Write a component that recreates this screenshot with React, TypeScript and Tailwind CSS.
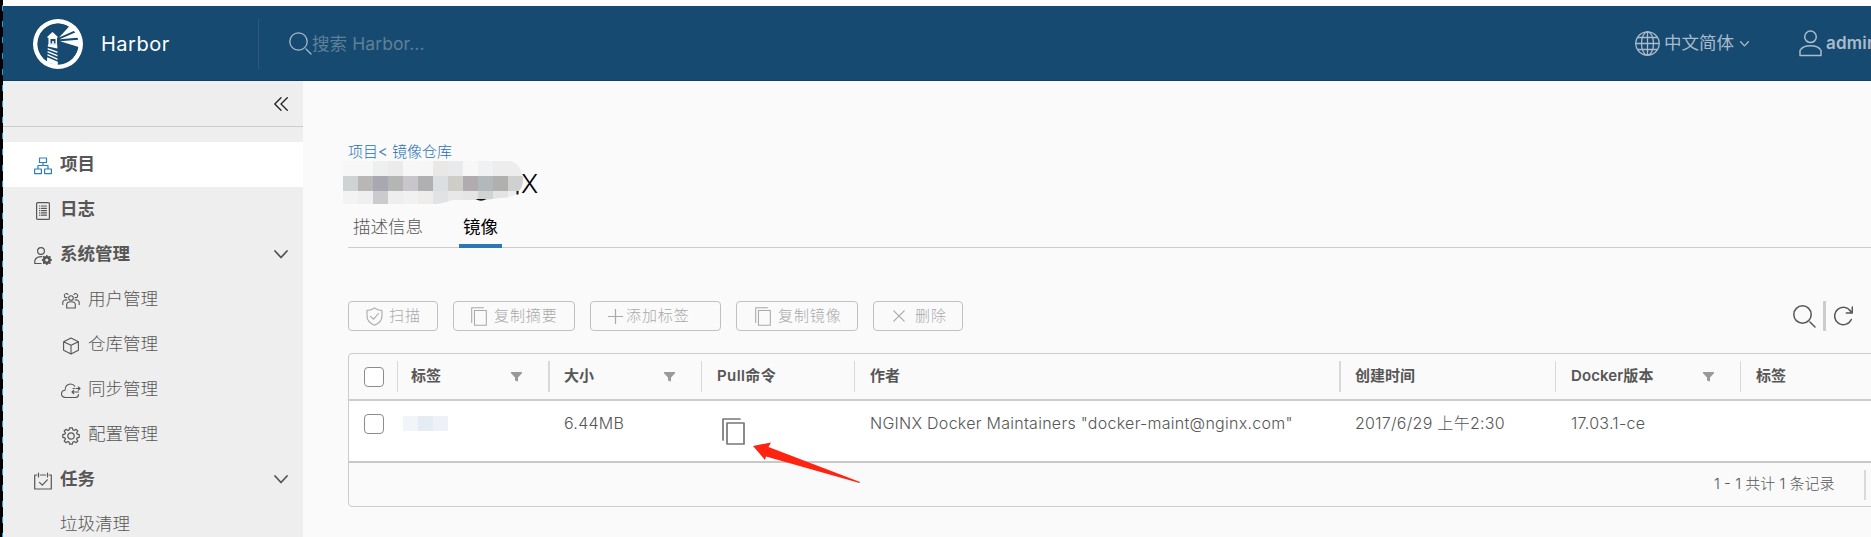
import React from 'react';

type P = { className?: string };

const Svg = ({ className, vb, children, sw = 1.2 }: { className?: string; vb: string; children: React.ReactNode; sw?: number }) => (
  <svg className={className} viewBox={vb} fill="none" stroke="currentColor" strokeWidth={sw} strokeLinecap="round" strokeLinejoin="round">
    {children}
  </svg>
);

const Logo = ({ className }: P) => (
  <svg className={className} viewBox="0 0 50 50" fill="#fff">
    <path fillRule="evenodd" d="M25 0a25 25 0 1 0 0 50a25 25 0 1 0 0-50zM25 4.6a20.4 20.4 0 0 1 0 40.8a20.4 20.4 0 0 1 0-40.8z" />
    <path fill="#174a70" d="M25 4.500a20.500 20.500 0 1 0 0 41a20.500 20.500 0 1 0 0-41z" />
    <path d="M19.500 13L24.500 17.500V19H14.500V17.500z" />
    <path fillRule="evenodd" d="M15.500 18.500h8.500v7h-8.500zM17.500 20h5v4.500h-1.700v-2.500h-1.600v2.500h-1.700z" />
    <path d="M15 25.300h9.200l.2 4.200L14.800 27.500z" />
    <path d="M14.700 29l9.700 3.500v1.600L14.700 30.600zM14.600 32l9.900 4v1.600L14.600 33.600zM14.500 35l10 4.500v1.600L14.500 36.600zM14.200 38.200l10.600 4.500V47L14 43z" />
    <path d="M26 18.500L37.500 6L43 11zM26.500 20.300L44.500 12.500L47.500 18.500zM27 22.300L49 20.500V29z" />
  </svg>
);

const SearchIcon = ({ className, sw = 1.3 }: P & { sw?: number }) => (
  <Svg className={className} vb="0 0 23 23" sw={sw}>
    <circle cx="9.500" cy="9.500" r="8.700" />
    <path d="M17 17l5 5" />
  </Svg>
);

const CopyIcon = ({ className, sw = 1.2 }: P & { sw?: number }) => (
  <Svg className={className} vb="0 0 23 27" sw={sw}>
    <path d="M1 22V1h17" />
    <path d="M5 5h17v21H5z" />
  </Svg>
);

const Filter = () => (
  <svg className="h-[10px] w-[11px] shrink-0" viewBox="0 0 11 10" fill="#9a9a9a">
    <path d="M0 0h11v1.200L7 5.500V9.500L4 8.500V5.500L0 1.200z" />
  </svg>
);

const Chevron = ({ className, sw = 1.800 }: P & { sw?: number }) => (
  <Svg className={className} vb="0 0 14 9" sw={sw}>
    <path d="M1 1l6 6.500L13 1" />
  </Svg>
);

const OrgIcon = () => (
  <Svg className="h-[18px] w-[18px] text-[#2f7fc0]" vb="0 0 18 18" sw={1.2}>
    <path d="M5.500 1h7v4.500h-7zM.6 12h6.800v4.600H.6zM10.600 12h6.800v4.600h-6.800zM9 5.500v3M4 11.500v-3h10v3" />
  </Svg>
);
const LogIcon = () => (
  <Svg className="h-[18px] w-[18px]" vb="0 0 18 18" sw={1.2}>
    <rect x="2.600" y=".6" width="12.800" height="16.800" rx="1" />
    <path d="M5.500 4h.4M7.500 4h5M5.500 6.300h.4M7.500 6.300h5M5.500 8.600h.4M7.500 8.600h5M5.500 10.900h.4M7.500 10.900h5M5.500 13.200h.4M7.500 13.200h5" />
  </Svg>
);
const AdminIcon = () => (
  <Svg className="h-[18px] w-[18px]" vb="0 0 18 18" sw={1.2}>
    <circle cx="7" cy="4" r="3.400" />
    <path d="M7 16.500H.8v-3c1-2.500 3.500-3.800 7-3.800" />
    <circle cx="12.800" cy="13" r="2.800" strokeWidth="2.400" />
    <path strokeWidth="1.800" d="M12.800 8.800v1M12.800 16.200v1M8.600 13h1M16 13h1.100M9.800 10l.7.700M15.100 15.300l.7.700M9.800 16l.7-.7M15.100 10.700l.7-.7" />
  </Svg>
);
const UsersIcon = () => (
  <Svg className="h-[18px] w-[18px]" vb="0 0 18 18" sw={1.1}>
    <circle cx="9" cy="6" r="2.300" />
    <path d="M4.700 16v-3.500c0-2 1.500-2.800 4.300-2.800s4.300.8 4.300 2.800V16z" />
    <path d="M5 5.500A2 2 0 1 1 6 2.500M13 5.500a2 2 0 1 0-1-3M5 8c-2.500-.5-4.200.6-4.200 2.500V12.500M13 8c2.500-.5 4.200.6 4.200 2.500V12.500" />
  </Svg>
);
const CubeIcon = () => (
  <Svg className="h-[18px] w-[18px]" vb="0 0 18 18" sw={1.1}>
    <path d="M9 1l7.400 3.700v8.600L9 17l-7.400-3.700V4.700zM1.600 4.700L9 8.300l7.400-3.600M9 8.300V17" />
  </Svg>
);
const CloudIcon = () => (
  <Svg className="-ml-px h-[16px] w-[20px]" vb="0 0 20 16" sw={1.1}>
    <path d="M17.500 11.500c0 2-1 3-3 3H4.500c-2.300 0-4-1.400-4-3.500S2 7.500 4 7.300C4 3.500 6.300 1 9.500 1c2 0 3.500.9 4.300 2.300" />
    <path d="M12 5.500h1.500M15 5.500h4M17.300 3.800L19 5.500l-1.700 1.700M17.500 9H11M12.700 7.300L11 9l1.700 1.700" />
  </Svg>
);
const GearIcon = () => (
  <Svg className="h-[18px] w-[18px]" vb="0 0 18 18" sw={1.2}>
    <circle cx="9" cy="9" r="3.200" />
    <path d="M7.600.8h2.800l.5 2.100 1.300.6 1.900-1.200 1.700 1.700-1.200 1.900.6 1.300 2 .5v2.600l-2 .5-.6 1.300 1.200 1.900-1.700 1.700-1.900-1.200-1.300.6-.5 2.100H7.600l-.5-2.100-1.300-.6-1.900 1.200-1.700-1.700 1.200-1.900-.6-1.300-2-.5V7.700l2-.5.6-1.300L2.200 4l1.700-1.700 1.900 1.200 1.300-.6z" />
  </Svg>
);
const TaskIcon = () => (
  <Svg className="h-[18px] w-[18px]" vb="0 0 18 18" sw={1.2}>
    <path d="M2.800 3H.7v14h16.600V3h-2.100M6.500 3h5M4.500 1v4M13.500 1v4M5.500 10.300l2.800 2.800 5-5.300" />
  </Svg>
);

type ItemProps = { icon?: React.ReactNode; label: string; sub?: boolean; bold?: boolean; active?: boolean; open?: boolean };
const Item = ({ icon, label, sub, bold, active, open }: ItemProps) => (
  <div className={`flex h-[45px] shrink-0 items-center pr-[15px] ${sub ? (icon ? 'pl-[59px]' : 'pl-[57px]') : 'pl-[31px]'} ${active ? 'bg-white' : ''}`}>
    {icon && <span className="mt-[2px] flex w-[26px] shrink-0 items-center">{icon}</span>}
    <span className={`-mt-[2px] flex-1 text-[17.5px] leading-6 ${bold ? 'font-bold' : 'font-light'}`}>{label}</span>
    {open && <Chevron className="h-[9px] w-[14px]" />}
  </div>
);

const Btn = ({ icon, label, className }: { icon: React.ReactNode; label: string; className: string }) => (
  <div className={`flex h-[30px] items-center whitespace-nowrap rounded-[4px] border border-[#c1c1c1] text-[15px] font-light tracking-[0.9px] text-[#a9a9a9] ${className}`}>
    {icon}
    {label}
  </div>
);

const cols = [
  { label: '标签', w: 'w-[151px]', sep: 'w-px', filter: true, val: '' },
  { label: '大小', w: 'w-[153px]', sep: 'w-[2px]', filter: true, val: '6.44MB' },
  { label: 'Pull命令', w: 'w-[153px]', sep: 'w-px', filter: false, val: '' },
  { label: '作者', w: 'w-[485px]', sep: 'w-px', filter: false, val: 'NGINX Docker Maintainers "docker-maint@nginx.com"' },
  { label: '创建时间', w: 'w-[216px]', sep: 'w-[2px]', filter: false, val: '2017/6/29 上午2:30' },
  { label: 'Docker版本', w: 'w-[185px]', sep: 'w-px', filter: true, val: '17.03.1-ce' },
  { label: '标签', w: 'w-[200px]', sep: 'w-px', filter: false, val: '' },
];

const mosaic = [
  ['#f7f7f7', '#f7f7f7', '#eeefef', '#ebebec', '#f7f7f7', '#f6f6f6', '#e9e8e7', '#e8eaec', '#f7f7f7', '#f0f1f2', '#ededed', '#ededed'],
  ['#ced3d3', '#b8b7b6', '#a9a8b0', '#b3b6b3', '#c9c6cb', '#b0b0b0', '#dcdfe1', '#cfcdc8', '#b0acae', '#b3b8ba', '#b0b0ae', '#cfd1d1'],
  ['#f3f3f3', '#efefef', '#cbcbce', '#eeeeee', '#f1f1f1', '#eeedec', '#e0e2e4', '#e8e8e8', '#e6e4e4', '#cfd3d4', '#e4e4e4', '#eeeeee'],
];

const Checkbox = () => <span className="block h-5 w-5 rounded-[4px] border border-[#8c8c8c] bg-white" />;

export default function App() {
  return (
    <div className="flex h-[537px] w-[1871px] overflow-hidden bg-white text-[#565656] [font-family:Inter,'Noto_Sans_CJK_SC',sans-serif]">
      <div className="flex w-[3px] shrink-0 bg-black pl-[2px]">
        <div className="mt-[5px] w-px bg-[repeating-linear-gradient(to_bottom,#0da2f5_0px,#0da2f5_6px,#000_6px,#000_16px)]" />
      </div>
      <div className="flex min-w-0 flex-1 flex-col pt-[6px]">
        <header className="flex h-[75px] shrink-0 items-center overflow-hidden border-b border-[#103f61] bg-[#174a70] pt-px">
          <Logo className="ml-[30px] h-[50px] w-[50px] shrink-0" />
          <span className="ml-[18px] w-[157px] text-[20px] leading-7 tracking-[0.5px] text-white">Harbor</span>
          <span className="h-[50px] w-px bg-[#31597a]" />
          <SearchIcon className="ml-[30px] h-[23px] w-[23px] text-[#a9bccb]" />
          <span className="mt-px w-[200px] text-[17.5px] tracking-[0.1px] text-[#5f8099]">搜索 Harbor...</span>
          <span className="flex-1" />
          <div className="flex w-[236px] shrink-0 items-center whitespace-nowrap text-[#a9bccb]">
            <Svg className="h-[25px] w-[25px] shrink-0" vb="0 0 25 25" sw={1.300}>
              <circle cx="12.500" cy="12.500" r="11.700" />
              <ellipse cx="12.500" cy="12.500" rx="6" ry="11.700" />
              <path d="M12.500 1v23M1 12.500h23M3 6.500h19M3 18.500h19" />
            </Svg>
            <span className="-mt-px ml-1 shrink-0 text-[17.5px]">中文简体</span>
            <Chevron className="ml-[6px] h-[6px] w-[9px] shrink-0" sw={2} />
            <Svg className="ml-[50px] h-[27px] w-[23px] shrink-0" vb="0 0 23 27" sw={1.500}>
              <circle cx="11.500" cy="6.800" r="5.800" />
              <path d="M1 25.500V20.500C3 17 7 15.800 11.500 15.800S20 17 22 20.500V25.500z" />
            </Svg>
            <span className="ml-1 shrink-0 text-[17px] font-semibold tracking-[0.2px]">admin</span>
          </div>
        </header>

        <div className="flex min-h-0 flex-1">
          <aside className="flex w-[300px] shrink-0 flex-col overflow-hidden bg-[#eee]">
            <div className="mb-[15px] flex h-[46px] shrink-0 items-center justify-end border-b border-[#ccc] pr-[15px]">
              <Svg className="h-[14px] w-[14px] text-[#222]" vb="0 0 14 14" sw={1.300}>
                <path d="M7 .7L.8 7 7 13.300M13.300 .7L7 7l6.300 6.300" />
              </Svg>
            </div>
            <Item icon={<OrgIcon />} label="项目" bold active />
            <Item icon={<LogIcon />} label="日志" bold />
            <Item icon={<AdminIcon />} label="系统管理" bold open />
            <Item icon={<UsersIcon />} label="用户管理" sub />
            <Item icon={<CubeIcon />} label="仓库管理" sub />
            <Item icon={<CloudIcon />} label="同步管理" sub />
            <Item icon={<GearIcon />} label="配置管理" sub />
            <Item icon={<TaskIcon />} label="任务" bold open />
            <Item label="垃圾清理" sub />
          </aside>

          <main className="flex min-w-0 flex-1 flex-col overflow-hidden bg-[#fafafa] pl-[45px] pt-[60px]">
            <div className="h-5 shrink-0 pt-px text-[15px] font-light leading-5 text-[#1f6fb5]">项目&lt; 镜像仓库</div>
            <div className="relative flex h-[43px] shrink-0 items-center pl-[173px] pt-[3px]">
              <span className="text-[26px] font-light leading-8 text-black">X</span>
              <svg className="absolute left-[-5px] top-0" width="190" height="46" viewBox="0 0 190 46">
                <clipPath id="smudge">
                  <path d="M0 0H166C174 0 180 10 180 18C180 30 172 37 158 37L140 39H110C100 42 96 43 90 43H0z" />
                </clipPath>
                <g clipPath="url(#smudge)">
                  {mosaic.map((row, y) =>
                    row.map((c, x) => <rect key={`${x}-${y}`} x={x * 15} y={y * 15} width="15" height="15" fill={c} />),
                  )}
                </g>
                <path d="M132.500 38h11q-5.500 3.500-11 0z" fill="#111" />
                <path d="M174.500 30v3.500" stroke="#111" strokeWidth="2" />
              </svg>
            </div>
            <div className="flex h-[44px] shrink-0 items-end border-b border-[#ccc] text-[17.5px] font-light leading-6">
              <span className="h-[32px] w-[111px] pl-[5px]">描述信息</span>
              <span className="-mb-px h-[33px] w-[43px] border-b-4 border-[#2d77b9] pl-1 font-normal text-black">镜像</span>
            </div>

            <div className="mt-[53px] flex h-[30px] shrink-0 items-center gap-[15px]">
              <Btn
                className="w-[90px] pl-[17px]"
                label="扫描"
                icon={
                  <Svg className="mr-[6px] h-[19px] w-[17px]" vb="0 0 17 19" sw={1.1}>
                    <path d="M8.500 .8C6.500 2.500 3.500 3.300 1 3.500V9c0 4 3.500 7.500 7.500 9.200C12.500 16.500 16 13 16 9V3.500C13.500 3.300 10.500 2.500 8.500 .8zM4.500 9.300L7.500 12.200 12.500 6.500" />
                  </Svg>
                }
              />
              <Btn className="w-[122px] pl-[17px]" label="复制摘要" icon={<CopyIcon className="mr-[7px] h-[19px] w-[16px]" sw={1.500} />} />
              <Btn
                className="w-[131px] pl-[17px]"
                label="添加标签"
                icon={
                  <Svg className="mr-[3px] h-[15px] w-[15px]" vb="0 0 15 15">
                    <path d="M7.500 .5v14M.5 7.500h14" />
                  </Svg>
                }
              />
              <Btn className="w-[122px] pl-[18px]" label="复制镜像" icon={<CopyIcon className="mr-[7px] h-[19px] w-[16px]" sw={1.500} />} />
              <Btn
                className="w-[90px] pl-[19px]"
                label="删除"
                icon={
                  <Svg className="mr-[10px] h-[12px] w-[12px]" vb="0 0 12 12">
                    <path d="M.8 .8l10.400 10.400M11.200 .8L.8 11.200" />
                  </Svg>
                }
              />
              <span className="flex-1" />
              <div className="flex shrink-0 items-center pr-[18px]">
                <SearchIcon className="h-[23px] w-[23px]" sw={1.500} />
                <span className="ml-[7px] mr-[8px] h-[30px] w-[3px] bg-[#ccc]" />
                <Svg className="h-[20px] w-[19px]" vb="0 0 19 20" sw={1.500}>
                  <path d="M17.300 13.500A8.700 8.700 0 1 1 16.800 5.500M18.300 1v6h-6" />
                </Svg>
              </div>
            </div>

            <section className="mt-[22px] flex h-[154px] w-[1600px] shrink-0 flex-col rounded-[4px] border border-[#ccc]">
              <div className="flex h-[47px] shrink-0 items-center border-b-2 border-[#ccc] text-[15px] font-semibold">
                <div className="w-[48px] shrink-0 pl-[15px]"><Checkbox /></div>
                {cols.map((c, i) => (
                  <div key={i} className={`flex shrink-0 items-center ${c.w}`}>
                    <span className={`h-[31px] shrink-0 bg-[#d9d9d9] ${c.sep}`} />
                    <span className={`-mt-px flex-1 whitespace-nowrap ${i === 0 ? 'pl-[13px]' : c.sep === 'w-px' ? 'pl-[15px]' : 'pl-[14px]'} ${i === 2 ? 'tracking-[0.4px]' : i === 5 ? 'tracking-[0.1px]' : ''}`}>{c.label}</span>
                    {c.filter && <span className="mr-[26px]"><Filter /></span>}
                  </div>
                ))}
              </div>
              <div className="flex h-[62px] shrink-0 border-b-2 border-[#c8c8c8] bg-white text-[16px] font-light tracking-[0.27px]">
                <div className="w-[48px] shrink-0 pl-[15px] pt-[13px]"><Checkbox /></div>
                {cols.map((c, i) => (
                  <div key={i} className={`shrink-0 whitespace-nowrap pl-4 pt-[10px] leading-6 ${c.w}`}>
                    {i === 0 && (
                      <div className="-ml-[10px] mt-[5px] flex">
                        <span className="h-[15px] w-[15px] bg-[#f1f4f8]" />
                        <span className="h-[15px] w-[15px] bg-[#e6ecf4]" />
                        <span className="h-[15px] w-[15px] bg-[#eef2f8]" />
                      </div>
                    )}
                    {i === 2 && (
                      <div className="relative ml-[5px] mt-[7px] text-[#777]">
                        <CopyIcon className="h-[27px] w-[23px]" sw={1.700} />
                        <svg className="absolute left-[31px] top-[24px]" width="108" height="42" viewBox="0 0 108 42" fill="#ff2312">
                          <path d="M0 4L18 .5L15.500 5L107 40L106.500 41L13 14.500L12 18z" />
                        </svg>
                      </div>
                    )}
                    {c.val}
                  </div>
                ))}
              </div>
              <div className="flex flex-1 items-center pl-[1365px] text-[15px] font-light">
                <span className="w-[150px] whitespace-nowrap">1 - 1 共计 1 条记录</span>
                <span className="h-[30px] w-[2px] bg-[#d9d9d9]" />
              </div>
            </section>
          </main>
        </div>
      </div>
    </div>
  );
}
